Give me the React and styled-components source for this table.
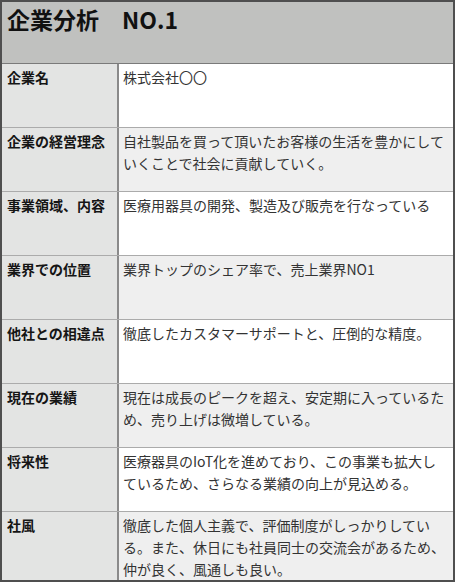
import styled, { createGlobalStyle } from 'styled-components';

const GlobalStyle = createGlobalStyle`
  body {
    margin: 0;
    background: #ffffff;
    font-family: 'Noto Sans CJK JP', 'Noto Sans', sans-serif;
  }
`;

const Sheet = styled.div`
  width: 455px;
  box-sizing: border-box;
  border: 2px solid #4f4f4f;
`;

const Header = styled.div`
  height: 62px;
  background-color: #c0c1bf;
  border-bottom: 1px solid #7a7a7a;
  padding: 1px 0 0 5px;
  box-sizing: border-box;
  font-size: 23px;
  font-weight: 700;
  line-height: 32px;
  color: #111;
`;

const Row = styled.div`
  display: grid;
  grid-template-columns: 117px 1fr;
  min-height: 63px;
  border-bottom: ${({ $last }) => ($last ? 'none' : '1px solid #ababab')};
  background-color: ${({ $alt }) => ($alt ? '#efefef' : '#ffffff')};
`;

const Label = styled.div`
  background-color: #e3e4e3;
  border-right: 2px solid #8a8a8a;
  padding: 2px 0 0 5px;
  font-size: 14px;
  font-weight: 700;
  line-height: 22px;
  color: #151515;
`;

const Value = styled.div`
  padding: 2px 6px 0 4px;
  font-size: 14px;
  line-height: 22px;
  color: #333;
`;

const rows = [
  ['企業名', '株式会社〇〇'],
  ['企業の経営理念', '自社製品を買って頂いたお客様の生活を豊かにしていくことで社会に貢献していく。'],
  ['事業領域、内容', '医療用器具の開発、製造及び販売を行なっている'],
  ['業界での位置', '業界トップのシェア率で、売上業界NO1'],
  ['他社との相違点', '徹底したカスタマーサポートと、圧倒的な精度。'],
  ['現在の業績', '現在は成長のピークを超え、安定期に入っているため、売り上げは微増している。'],
  ['将来性', '医療器具のIoT化を進めており、この事業も拡大しているため、さらなる業績の向上が見込める。'],
  ['社風', '徹底した個人主義で、評価制度がしっかりしている。また、休日にも社員同士の交流会があるため、仲が良く、風通しも良い。'],
];

export default function App() {
  return (
    <>
      <GlobalStyle />
      <Sheet>
        <Header>企業分析　NO.1</Header>
        {rows.map(([label, value], i) => (
          <Row key={label} $alt={i % 2 === 1} $last={i === rows.length - 1}>
            <Label>{label}</Label>
            <Value>{value}</Value>
          </Row>
        ))}
      </Sheet>
    </>
  );
}
